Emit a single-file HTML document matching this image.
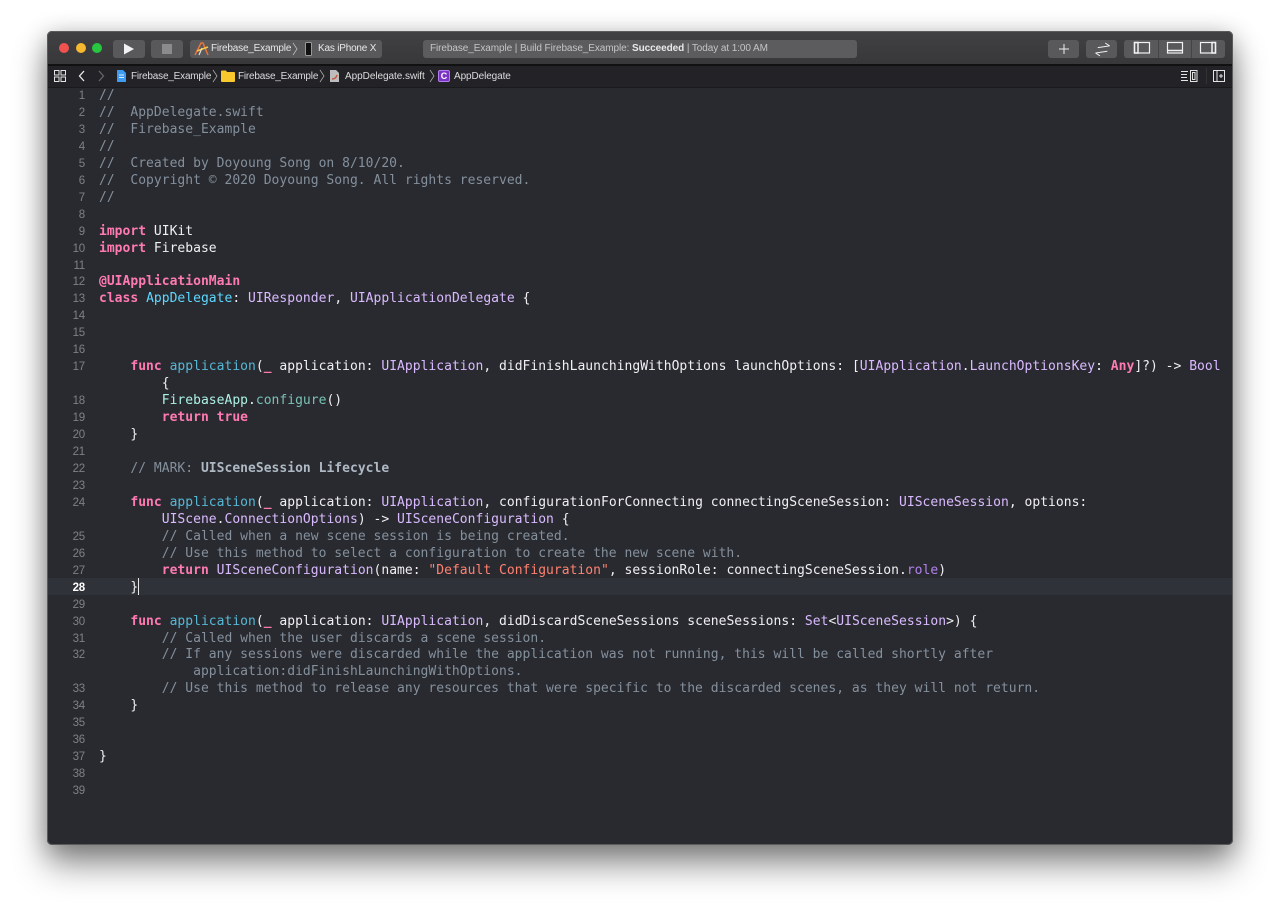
<!DOCTYPE html>
<html><head><meta charset="utf-8"><style>
html,body{margin:0;padding:0;width:1280px;height:907px;background:#fff;overflow:hidden}
#win{position:absolute;left:47px;top:31px;width:1186px;height:814px;background:#292a30;border-radius:5px;box-shadow:0 20px 34px rgba(0,0,0,.42),0 4px 24px rgba(0,0,0,.25);overflow:hidden}
#edge{position:absolute;left:47px;top:31px;width:1184px;height:812px;border:1px solid #5b5b5e;border-radius:5px;z-index:5;pointer-events:none}
#tb{position:absolute;left:0;top:0;width:1186px;height:33px;background:linear-gradient(#414144,#38383a)}
#sep{position:absolute;left:0;top:33px;width:1186px;height:2px;background:#111}
#bc{position:absolute;left:0;top:35px;width:1186px;height:21px;background:#232327;border-bottom:1px solid #1a1a1d}
.ab{position:absolute}
.dot{position:absolute;width:10px;height:10px;border-radius:50%;top:12px}
.btn{position:absolute;top:9px;height:18px;background:#59595c;border-radius:3px}
.ui{position:absolute;font:10px/14px "Liberation Sans",sans-serif;letter-spacing:-.2px;color:#dcdcde;white-space:pre}
#code{position:absolute;left:52px;top:57px;font:13px/16.95px "DejaVu Sans Mono","Liberation Mono",monospace;letter-spacing:.016px;color:#f0f0f2;white-space:pre;filter:blur(.25px)}
#nums{position:absolute;left:0;top:57px;width:38px;text-align:right;font:11.5px/16.95px "Liberation Sans",sans-serif;letter-spacing:-.2px;color:#808084;white-space:pre}
#hl{position:absolute;left:0;top:547px;width:1186px;height:17px;background:#2f3239}
#caret{position:absolute;left:91px;top:547px;width:1px;height:17px;background:#e8e8e8}
i,b{font-style:normal}
.c{color:#84909c}
.cb{color:#aeb9c4;font-weight:bold}
.k{color:#ff7ab2;font-weight:bold}
.f{color:#55b8d5}
.d{color:#5dd8ff}
.t{color:#dabaff}
.g{color:#acf2e4}
.h{color:#78c2b3}
.s{color:#ff8170}
.r{color:#b281eb}
</style></head><body>
<div id="win">
<div id="tb"></div><div id="sep"></div><div id="bc"></div>
<div class="dot" style="left:12px;background:#f0524f"></div>
<div class="dot" style="left:29px;background:#f5b82e"></div>
<div class="dot" style="left:45px;background:#28c640"></div>
<div class="btn" style="left:66px;width:32px"></div>
<svg class="ab" style="left:76px;top:11px" width="12" height="14"><path d="M1 1.5 L11 7 L1 12.5Z" fill="#f2f2f2"/></svg>
<div class="btn" style="left:104px;width:32px"></div>
<div class="ab" style="left:115px;top:13px;width:10px;height:10px;background:#8b8b8d"></div>
<div class="btn" style="left:143px;width:192px"></div>
<svg class="ab" style="left:147px;top:10px" width="16" height="16"><path d="M1 14 L7 2 L9 2 L14 14" fill="none" stroke="#e8743b" stroke-width="1.5"/><path d="M3 10 L14 6" stroke="#f5c542" stroke-width="1.6"/><path d="M5 14 L8 7" stroke="#ddd" stroke-width="1.2"/></svg>
<div class="ui" style="left:164px;top:11px;color:#e6e6e8">Firebase_Example</div>
<svg class="ab" style="left:245px;top:10px" width="7" height="16"><path d="M1 2 L5 8 L1 14" fill="none" stroke="#bbb" stroke-width=".8"/></svg>
<div class="ab" style="left:258px;top:11px;width:5px;height:12px;background:#111;border:1px solid #999;border-radius:1.5px"></div>
<div class="ui" style="left:271px;top:11px;color:#e6e6e8">Kas iPhone X</div>
<div class="btn" style="left:376px;width:434px;background:#5c5c5f"></div>
<div class="ui" style="left:383px;top:11px;color:#c4c4c6;letter-spacing:-.08px">Firebase_Example | Build Firebase_Example: <b style="color:#e8e8ea">Succeeded</b> | Today at 1:00 AM</div>
<div class="btn" style="left:1001px;width:31px"></div>
<svg class="ab" style="left:1011px;top:12px" width="12" height="12"><path d="M1 6H11M6 1V11" stroke="#eee" stroke-width="1"/></svg>
<div class="btn" style="left:1039px;width:31px"></div>
<svg class="ab" style="left:1046px;top:10px" width="18" height="16"><path d="M5 6H17M13 2.5L17 6M2 11H14M6 14.5L2 11" transform="rotate(-8 9 8)" fill="none" stroke="#eee" stroke-width="1"/></svg>
<div class="btn" style="left:1077px;width:101px"></div>
<div class="ab" style="left:1111px;top:9px;width:1px;height:18px;background:#444"></div>
<div class="ab" style="left:1144px;top:9px;width:1px;height:18px;background:#444"></div>
<svg class="ab" style="left:1086px;top:10px" width="90" height="14" fill="none" stroke="#f2f2f2" stroke-width="1.2"><rect x="1.5" y="1.5" width="15" height="10.5"/><rect x="1.5" y="1.5" width="3.5" height="10.5" stroke-width="1.5"/><rect x="34.5" y="1.5" width="15" height="10.5"/><path d="M34.5 9.5H49.5" stroke-width="1.5"/><rect x="67.5" y="1.5" width="15" height="10.5"/><rect x="79" y="1.5" width="3.5" height="10.5" stroke-width="1.5"/></svg>

<svg class="ab" style="left:7px;top:39px" width="12" height="12" fill="none" stroke="#e4e4e4" stroke-width="1"><rect x=".5" y=".5" width="4.5" height="4.5"/><rect x="7" y=".5" width="4.5" height="4.5"/><rect x=".5" y="7" width="4.5" height="4.5"/><rect x="7" y="7" width="4.5" height="4.5"/></svg>
<svg class="ab" style="left:31px;top:39px" width="8" height="12"><path d="M6 1 L1.5 6 L6 11" fill="none" stroke="#eee" stroke-width="1.3"/></svg>
<svg class="ab" style="left:50px;top:39px" width="8" height="12"><path d="M2 1 L6.5 6 L2 11" fill="none" stroke="#666" stroke-width="1.3"/></svg>
<svg class="ab" style="left:69px;top:38px" width="11" height="14"><path d="M1 1H7L10 4V13H1Z" fill="#3f9bf0"/><path d="M3 6H8M3 8.5H8" stroke="#d5ebff" stroke-width="1"/></svg>
<div class="ui" style="left:84px;top:39px">Firebase_Example</div>
<svg class="ab" style="left:165px;top:37px" width="7" height="16"><path d="M1 2 L5 8 L1 14" fill="none" stroke="#aaa" stroke-width=".8"/></svg>
<svg class="ab" style="left:174px;top:39px" width="14" height="12"><path d="M0 1.5Q0 .5 1 .5H5L6 2H13Q14 2 14 3V11Q14 12 13 12H1Q0 12 0 11Z" fill="#f9c82d"/></svg>
<div class="ui" style="left:191px;top:39px">Firebase_Example</div>
<svg class="ab" style="left:272px;top:37px" width="7" height="16"><path d="M1 2 L5 8 L1 14" fill="none" stroke="#aaa" stroke-width=".8"/></svg>
<svg class="ab" style="left:283px;top:38px" width="10" height="14"><path d="M0 1H6L9 4V13H0Z" fill="#bdbdbd"/><path d="M2 10Q6 10 7 6" stroke="#c0563c" stroke-width="1.5" fill="none"/></svg>
<div class="ui" style="left:298px;top:39px;letter-spacing:-.05px">AppDelegate.swift</div>
<svg class="ab" style="left:382px;top:37px" width="7" height="16"><path d="M1 2 L5 8 L1 14" fill="none" stroke="#aaa" stroke-width=".8"/></svg>
<div class="ab" style="left:391px;top:39px;width:10px;height:10px;background:#7a34c4;border:1px solid #b37cf0;border-radius:2px;color:#fff;font:bold 9px/10px 'Liberation Sans',sans-serif;text-align:center">C</div>
<div class="ui" style="left:407px;top:39px;letter-spacing:-.1px">AppDelegate</div>
<svg class="ab" style="left:1134px;top:39px" width="18" height="12" fill="none" stroke="#e4e4e4" stroke-width="1"><path d="M0 1.5H7M0 4.5H6M0 7.5H6M0 10.5H7"/><rect x="9.5" y=".5" width="6.5" height="11"/><rect x="11.5" y="2.5" width="2.5" height="7"/></svg>
<div class="ab" style="left:1159px;top:37px;width:1px;height:16px;background:#333"></div>
<svg class="ab" style="left:1166px;top:39px" width="12" height="12" fill="none" stroke="#e4e4e4" stroke-width="1"><rect x=".5" y=".5" width="11" height="11"/><path d="M4 .5V11.5"/><path d="M6 6H10M8 4V8" /></svg>

<div id="hl"></div><div id="caret"></div>
<div id="nums">1
2
3
4
5
6
7
8
9
10
11
12
13
14
15
16
17

18
19
20
21
22
23
24

25
26
27
<b style="color:#fff">28</b>
29
30
31
32

33
34
35
36
37
38
39</div>
<div id="code"><i class="c">//
//  AppDelegate.swift
//  Firebase_Example
//
//  Created by Doyoung Song on 8/10/20.
//  Copyright © 2020 Doyoung Song. All rights reserved.
//</i>

<i class="k">import</i> UIKit
<i class="k">import</i> Firebase

<i class="k">@UIApplicationMain</i>
<i class="k">class</i> <i class="d">AppDelegate</i>: <i class="t">UIResponder</i>, <i class="t">UIApplicationDelegate</i> {



    <i class="k">func</i> <i class="f">application</i>(<i class="k">_</i> application: <i class="t">UIApplication</i>, didFinishLaunchingWithOptions launchOptions: [<i class="t">UIApplication</i>.<i class="t">LaunchOptionsKey</i>: <i class="k">Any</i>]?) -&gt; <i class="t">Bool</i>
        {
        <i class="g">FirebaseApp</i>.<i class="h">configure</i>()
        <i class="k">return</i> <i class="k">true</i>
    }

    <i class="c">// MARK: </i><i class="cb">UISceneSession Lifecycle</i>

    <i class="k">func</i> <i class="f">application</i>(<i class="k">_</i> application: <i class="t">UIApplication</i>, configurationForConnecting connectingSceneSession: <i class="t">UISceneSession</i>, options:
        <i class="t">UIScene</i>.<i class="t">ConnectionOptions</i>) -&gt; <i class="t">UISceneConfiguration</i> {
        <i class="c">// Called when a new scene session is being created.
        // Use this method to select a configuration to create the new scene with.</i>
        <i class="k">return</i> <i class="t">UISceneConfiguration</i>(name: <i class="s">"Default Configuration"</i>, sessionRole: connectingSceneSession.<i class="r">role</i>)
    }

    <i class="k">func</i> <i class="f">application</i>(<i class="k">_</i> application: <i class="t">UIApplication</i>, didDiscardSceneSessions sceneSessions: <i class="t">Set</i>&lt;<i class="t">UISceneSession</i>&gt;) {
        <i class="c">// Called when the user discards a scene session.
        // If any sessions were discarded while the application was not running, this will be called shortly after
            application:didFinishLaunchingWithOptions.
        // Use this method to release any resources that were specific to the discarded scenes, as they will not return.</i>
    }


}
</div>
</div>
<div id="edge"></div>
</body></html>
